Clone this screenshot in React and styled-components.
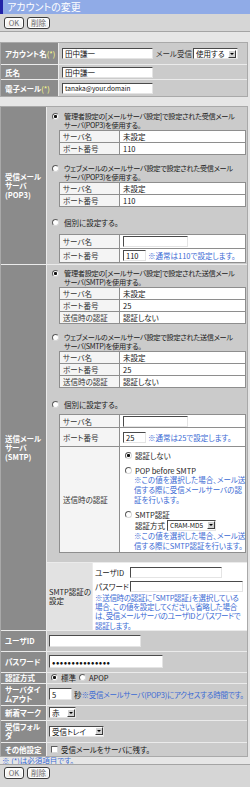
import React from 'react';
import styled, { createGlobalStyle } from 'styled-components';

const GlobalStyle = createGlobalStyle`
  html, body {
    margin: 0;
    padding: 0;
    background: #e6e6e6;
  }
  body {
    width: 250px;
    font-family: "Noto Sans CJK JP", "Noto Sans", sans-serif;
    font-size: 7.5px;
    line-height: 9px;
    color: #151515;
    font-feature-settings: "palt";
  }
`;

const Page = styled.div`
  display: flex;
  flex-direction: column;
`;

const TitleBar = styled.div`
  height: 14px;
  padding-left: 4px;
  border-left: 3px solid #2323a8;
  background: #90abe7;
  color: #fff;
  font-size: 10px;
  line-height: 14px;
`;

const ButtonBar = styled.div`
  display: flex;
  align-items: ${p => (p.$bottom ? 'flex-start' : 'center')};
  gap: 3px;
  height: ${p => (p.$bottom ? 24 : 18)}px;
  padding: ${p => (p.$bottom ? '2px 0 0 4px' : '0 0 0 4px')};
  box-sizing: border-box;
  background: #d6d6d6;
  ${p => (p.$bottom ? 'border-top: 1px solid #a4a4a4;' : 'border-bottom: 1px solid #a4a4a4;')}
`;

const Button = styled.button`
  height: 12px;
  min-width: ${p => p.$w}px;
  padding: 0 3px;
  margin: 0;
  border: 1px solid #3c3c3c;
  border-radius: 3px;
  background: linear-gradient(#ffffff, #ececec);
  box-shadow: inset 0 0 0 1px #fff;
  color: #6a6a6a;
  font: inherit;
  font-size: 7.5px;
  line-height: 9px;
`;

const Table = styled.div`
  display: grid;
  grid-template-columns: ${p => p.$label}px 1fr;
  gap: 1px;
  width: 248px;
  box-sizing: border-box;
  margin-top: ${p => p.$mt}px;
  border: 1px solid #a9a9a9;
  background: #ebebeb;
`;

const Label = styled.div`
  display: flex;
  align-items: center;
  min-height: ${p => p.$h || 0}px;
  padding-left: 4px;
  background: #8b8b8b;
  color: #fff;
  font-weight: bold;
  line-height: 9px;
  white-space: nowrap;
`;

const Req = styled.span`
  color: #ffff8a;
  font-weight: normal;
`;

const Cell = styled.div`
  display: flex;
  align-items: center;
  gap: ${p => p.$gap || 0}px;
  min-height: ${p => p.$h || 0}px;
  padding-left: ${p => p.$pl ?? 2}px;
  background: #cbcbcb;
  white-space: nowrap;
`;

const Caption = styled.span`
  color: #333;
  margin: 0 1px 0 3px;
`;

const TextInput = styled.input`
  width: ${p => p.$w}px;
  height: ${p => p.$h || 11}px;
  box-sizing: border-box;
  margin: 0;
  padding: 0 2px;
  border: 1px solid;
  border-color: #4a4a4a #e4e4e4 #e4e4e4 #4a4a4a;
  background: #fff;
  color: #111;
  font: inherit;
  font-size: ${p => p.$fs || 7.5}px;
  letter-spacing: ${p => p.$ls || 0}px;
  outline: none;
`;

const SelectBox = styled.span`
  display: inline-flex;
  align-items: center;
  width: ${p => p.$w}px;
  height: 11px;
  box-sizing: border-box;
  border: 1px solid;
  border-color: #4a4a4a #e4e4e4 #e4e4e4 #4a4a4a;
  background: #fff;
`;

const SelectField = styled.select`
  appearance: none;
  flex: 1;
  min-width: 0;
  height: 9px;
  margin: 0;
  padding: 0 1px 0 2px;
  border: 0;
  background: transparent;
  color: #111;
  font: inherit;
  font-size: ${p => p.$fs || 7.5}px;
  line-height: 9px;
  outline: none;
`;

const SelectArrow = styled.span`
  display: flex;
  align-items: center;
  justify-content: center;
  flex: none;
  width: 8px;
  height: 8px;
  box-sizing: border-box;
  margin-right: 0.5px;
  border: 1px solid;
  border-color: #fff #3a3a3a #3a3a3a #fff;
  background: #d2d2d2;

  &::after {
    content: "";
    border-left: 2px solid transparent;
    border-right: 2px solid transparent;
    border-top: 2px solid #000;
  }
`;

const Radio = styled.input.attrs({ type: 'radio' })`
  appearance: none;
  flex: none;
  width: 7px;
  height: 7px;
  box-sizing: border-box;
  margin: 1px 0 0;
  border: 1px solid;
  border-color: #5c5c5c #d8d8d8 #d8d8d8 #5c5c5c;
  border-radius: 50%;
  background: #fff;

  &:checked {
    background: radial-gradient(circle, #111 0 1.3px, #fff 1.8px);
  }
`;

const Check = styled.input.attrs({ type: 'checkbox' })`
  appearance: none;
  flex: none;
  width: 7px;
  height: 7px;
  box-sizing: border-box;
  margin: 0 3px 0 2px;
  border: 1px solid;
  border-color: #5c5c5c #d8d8d8 #d8d8d8 #5c5c5c;
  background: #fff;
`;

const Choice = styled.label`
  display: flex;
  align-items: flex-start;
  gap: ${p => p.$gap ?? 5}px;
  margin-top: ${p => p.$mt || 0}px;
  margin-bottom: ${p => p.$mb || 0}px;
  white-space: nowrap;
  font-size: ${p => p.$fs || 7.5}px;
  line-height: 9px;
  letter-spacing: ${p => p.$ls || 0}px;
  color: #1a1a1a;
`;

const Section = styled.div`
  display: flex;
  flex-direction: column;
  padding: ${p => p.$pad};
  background: #cbcbcb;
`;

const SubTable = styled.div`
  display: grid;
  grid-template-columns: 59px 1fr;
  gap: 1px;
  width: 187px;
  box-sizing: border-box;
  margin-left: 7px;
  border: 1px solid #8e8e8e;
  background: #8e8e8e;
`;

const SubLabel = styled.div`
  display: flex;
  align-items: center;
  min-height: ${p => p.$h || 11}px;
  padding-left: 3px;
  background: #f4f4f4;
  color: #333;
  white-space: nowrap;
`;

const SubValue = styled.div`
  display: flex;
  align-items: center;
  gap: 2px;
  min-height: ${p => p.$h || 11}px;
  padding-left: 3px;
  background: #fff;
  white-space: nowrap;
`;

const AuthChoices = styled.div`
  display: flex;
  flex-direction: column;
  align-items: flex-start;
  padding: 4px 0 1px 5px;
  background: #fff;
  white-space: nowrap;
`;

const Note = styled.div`
  margin-left: ${p => p.$ml || 0}px;
  color: #3a6ad4;
  line-height: ${p => p.$lh || 10}px;
  letter-spacing: ${p => p.$ls || 0}px;
  white-space: nowrap;
`;

const Hint = styled.span`
  color: #3a6ad4;
  letter-spacing: ${p => p.$ls || 0}px;
`;

const SmtpBody = styled.div`
  display: grid;
  grid-template-rows: auto auto;
  gap: 1px;
  background: #ebebeb;
`;

const AuthGrid = styled.div`
  display: grid;
  grid-template-columns: 45px 1fr;
  gap: 1px;
  background: #ebebeb;
`;

const AuthLabel = styled.div`
  display: flex;
  align-items: center;
  padding-left: 2px;
  background: #e2e2e2;
  color: #222;
`;

const AuthValue = styled.div`
  display: flex;
  flex-direction: column;
  padding: 3px 0 0 2px;
  background: #fff;
`;

const Field = styled.div`
  display: flex;
  align-items: center;
  height: 12px;
  margin-left: ${p => p.$ml || 0}px;
  margin-bottom: ${p => p.$mb || 0}px;
  color: #222;
  white-space: nowrap;
`;

const FieldName = styled.span`
  width: ${p => p.$w}px;
  flex: none;
`;

const FootNote = styled.div`
  height: 7px;
  padding-left: 2px;
  color: #3a6ad4;
  line-height: 7px;
`;

function Select({ w, value, fs }) {
  return (
    <SelectBox $w={w}>
      <SelectField $fs={fs} defaultValue={value}>
        <option>{value}</option>
      </SelectField>
      <SelectArrow />
    </SelectBox>
  );
}

function InfoTable({ rows }) {
  return (
    <SubTable>
      {rows.map(([k, v]) => (
        <React.Fragment key={k}>
          <SubLabel>{k}</SubLabel>
          <SubValue>{v}</SubValue>
        </React.Fragment>
      ))}
    </SubTable>
  );
}

function Buttons({ bottom }) {
  return (
    <ButtonBar $bottom={bottom}>
      <Button $w={20}>OK</Button>
      <Button $w={22}>削除</Button>
    </ButtonBar>
  );
}

export default function App() {
  return (
    <Page>
      <GlobalStyle />
      <TitleBar>アカウントの変更</TitleBar>
      <Buttons />

      <Table $label={57} $mt={10}>
        <Label $h={21}>アカウント名<Req>(*)</Req></Label>
        <Cell $pl={3}>
          <TextInput $w={91} defaultValue="田中謙一" />
          <Caption>メール受信</Caption>
          <Select w={45} value="使用する" />
        </Cell>
        <Label $h={14}>氏名</Label>
        <Cell $pl={3}>
          <TextInput $w={91} defaultValue="田中謙一" />
        </Cell>
        <Label $h={16}>電子メール<Req>(*)</Req></Label>
        <Cell $pl={3}>
          <TextInput $w={91} $fs={6.5} defaultValue="tanaka@your.domain" />
        </Cell>
      </Table>

      <Table $label={45} $mt={9}>
        <Label>受信メール<br />サーバ<br />(POP3)</Label>
        <Section $pad="5px 0 1px 5px">
          <Choice $fs={7.2} $ls={-0.3}>
            <Radio name="pop" defaultChecked />
            <span>管理者設定の[メールサーバ設定]で設定された受信メール<br />サーバ(POP3)を使用する。</span>
          </Choice>
          <InfoTable rows={[['サーバ名', '未設定'], ['ポート番号', '110']]} />
          <Choice $mt={9} $fs={7.2} $ls={-0.3}>
            <Radio name="pop" />
            <span>ウェブメールのメールサーバ設定で設定された受信メール<br />サーバ(POP3)を使用する。</span>
          </Choice>
          <InfoTable rows={[['サーバ名', '未設定'], ['ポート番号', '110']]} />
          <Choice $mt={11} $mb={7}>
            <Radio name="pop" />
            <span>個別に設定する。</span>
          </Choice>
          <SubTable>
            <SubLabel $h={13}>サーバ名</SubLabel>
            <SubValue $h={13}><TextInput $w={65} /></SubValue>
            <SubLabel $h={13}>ポート番号</SubLabel>
            <SubValue $h={13}>
              <TextInput $w={23} defaultValue="110" />
              <Hint>※通常は110で設定します。</Hint>
            </SubValue>
          </SubTable>
        </Section>

        <Label>送信メール<br />サーバ<br />(SMTP)</Label>
        <SmtpBody>
          <Section $pad="4px 0 9px 5px">
            <Choice $fs={7.2} $ls={-0.3}>
              <Radio name="smtp" defaultChecked />
              <span>管理者設定の[メールサーバ設定]で設定された送信メール<br />サーバ(SMTP)を使用する。</span>
            </Choice>
            <InfoTable rows={[['サーバ名', '未設定'], ['ポート番号', '25'], ['送信時の認証', '認証しない']]} />
            <Choice $mt={9} $fs={7.2} $ls={-0.3}>
              <Radio name="smtp" />
              <span>ウェブメールのメールサーバ設定で設定された送信メール<br />サーバ(SMTP)を使用する。</span>
            </Choice>
            <InfoTable rows={[['サーバ名', '未設定'], ['ポート番号', '25'], ['送信時の認証', '認証しない']]} />
            <Choice $mt={12} $mb={5}>
              <Radio name="smtp" />
              <span>個別に設定する。</span>
            </Choice>
            <SubTable>
              <SubLabel $h={12}>サーバ名</SubLabel>
              <SubValue $h={12}><TextInput $w={65} /></SubValue>
              <SubLabel $h={18}>ポート番号</SubLabel>
              <SubValue $h={18}>
                <TextInput $w={23} defaultValue="25" />
                <Hint>※通常は25で設定します。</Hint>
              </SubValue>
              <SubLabel>送信時の認証</SubLabel>
              <AuthChoices>
                <Choice $gap={3}>
                  <Radio name="auth" defaultChecked />
                  <span>認証しない</span>
                </Choice>
                <Choice $gap={3} $mt={6}>
                  <Radio name="auth" />
                  <span>POP before SMTP</span>
                </Choice>
                <Note $ml={9}>
                  ※この値を選択した場合、メール送<br />
                  信する際に受信メールサーバの認<br />
                  証を行います。
                </Note>
                <Choice $gap={3} $mt={5}>
                  <Radio name="auth" />
                  <span>SMTP認証</span>
                </Choice>
                <Field $ml={10}>
                  <FieldName $w={32}>認証方式</FieldName>
                  <Select w={49} fs={6.5} value="CRAM-MD5" />
                </Field>
                <Note $ml={9}>
                  ※この値を選択した場合、メール送<br />
                  信する際にSMTP認証を行います。
                </Note>
              </AuthChoices>
            </SubTable>
          </Section>
          <AuthGrid>
            <AuthLabel>SMTP認証の<br />設定</AuthLabel>
            <AuthValue>
              <Field $mb={2}>
                <FieldName $w={35}>ユーザID</FieldName>
                <TextInput $w={92} />
              </Field>
              <Field $mb={1}>
                <FieldName $w={35}>パスワード</FieldName>
                <TextInput $w={113} />
              </Field>
              <Note $lh={9.2} $ls={-0.3}>
                ※送信時の認証に「SMTP認証」を選択している<br />
                場合、この値を設定してください。省略した場合<br />
                は、受信メールサーバのユーザIDとパスワードで<br />
                認証します。
              </Note>
            </AuthValue>
          </AuthGrid>
        </SmtpBody>

        <Label $h={20}>ユーザID</Label>
        <Cell><TextInput $w={92} $h={12} /></Cell>
        <Label $h={20}>パスワード</Label>
        <Cell>
          <TextInput type="password" $w={114} $h={13} $fs={10} $ls={0.5} defaultValue="tanakapassword1" />
        </Cell>
        <Label $h={10}>認証方式</Label>
        <Cell $gap={3} $pl={4}>
          <Choice $gap={3}><Radio name="method" defaultChecked /><span>標準</span></Choice>
          <Choice $gap={3}><Radio name="method" /><span>APOP</span></Choice>
        </Cell>
        <Label $h={21}>サーバタイ<br />ムアウト</Label>
        <Cell $gap={2}>
          <TextInput $w={23} $h={12} defaultValue="5" />
          <span>秒<Hint $ls={-0.25}>※受信メールサーバ(POP3)にアクセスする時間です。</Hint></span>
        </Cell>
        <Label $h={14}>新着マーク</Label>
        <Cell><Select w={27} value="赤" /></Cell>
        <Label $h={21}>受信フォル<br />ダ</Label>
        <Cell><Select w={55} value="受信トレイ" /></Cell>
        <Label $h={13}>その他設定</Label>
        <Cell>
          <Check />
          <span>受信メールをサーバに残す。</span>
        </Cell>
      </Table>

      <FootNote>※ (*)は必須項目です。</FootNote>
      <Buttons bottom />
    </Page>
  );
}
